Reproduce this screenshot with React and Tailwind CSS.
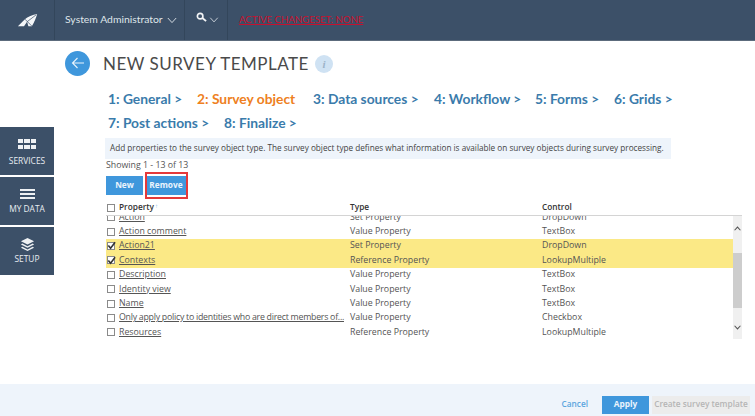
import React from "react";

const steps1 = [
  ["1: General >", false, "w-[89px]"],
  ["2: Survey object", true, "w-[116px]"],
  ["3: Data sources >", false, "w-[121px]"],
  ["4: Workflow >", false, "w-[101px]"],
  ["5: Forms >", false, "w-[79px]"],
  ["6: Grids >", false, ""],
];

const rows = [
  ["Action", "Set Property", "DropDown", false],
  ["Action comment", "Value Property", "TextBox", false],
  ["Action21", "Set Property", "DropDown", true],
  ["Contexts", "Reference Property", "LookupMultiple", true],
  ["Description", "Value Property", "TextBox", false],
  ["Identity view", "Value Property", "TextBox", false],
  ["Name", "Value Property", "TextBox", false],
  ["Only apply policy to identities who are direct members of...", "Value Property", "Checkbox", false],
  ["Resources", "Reference Property", "LookupMultiple", false],
];

function Box({ checked }) {
  return (
    <span className="flex h-[8px] w-[8px] shrink-0 items-center justify-center border border-[#8a8a8a] bg-white">
      {checked && (
        <svg viewBox="0 0 10 10" className="h-[9px] w-[9px] overflow-visible">
          <path d="M1.5 5 L4 8 L9 1.5" fill="none" stroke="#333" strokeWidth="1.8" />
        </svg>
      )}
    </span>
  );
}

function Chevron({ className, width = 1.1 }) {
  return (
    <svg viewBox="0 0 12 8" className={className}>
      <path d="M1 1 L6 6.5 L11 1" fill="none" stroke="currentColor" strokeWidth={width} />
    </svg>
  );
}

function Logo() {
  return (
    <svg viewBox="0 0 24 16" className="h-[14px] w-[23px]">
      <path d="M1 15 L9 7 C12 4 18 2 23 1 C22 5 20 10 17 15 L13 15 L11.5 10 L8 15 Z" fill="#f4f6f8" />
      <path d="M9 7 L17 15 M22 2 L11.5 10" stroke="#3c5068" strokeWidth="0.8" fill="none" />
    </svg>
  );
}

function SideItem({ icon, label, tight }) {
  return (
    <div className={`flex h-[48px] flex-col items-center justify-center bg-[#3c5068] text-[#e8edf2] ${tight ? "gap-[1px] pb-[2px]" : "gap-[3px]"}`}>
      <div className="flex h-[16px] items-center">{icon}</div>
      <div className="text-[8.4px] leading-[11px]">{label}</div>
    </div>
  );
}

export default function App() {
  return (
    <div className="flex h-[416px] w-[755px] flex-col overflow-hidden bg-white font-['Open_Sans',sans-serif] text-[#444]">
      <header className="flex h-[41px] shrink-0 items-stretch border-b border-[#5c6b7c] bg-[#3c5068] text-[#dfe5ea]">
        <div className="flex w-[55px] items-center justify-center border-r border-[#33465b]">
          <Logo />
        </div>
        <div className="flex w-[130px] items-center gap-[4px] border-r border-[#33465b] pl-[10px] font-['Lato',sans-serif] text-[10.4px]">
          System Administrator
          <Chevron className="mt-[1px] h-[7px] w-[10px]" />
        </div>
        <div className="flex w-[43px] items-center gap-[2px] border-r border-[#33465b] pb-[5px] pl-[11px]">
          <svg viewBox="0 0 12 12" className="h-[11px] w-[11px]">
            <circle cx="4.5" cy="4.5" r="3" fill="none" stroke="#f2f4f6" strokeWidth="1.8" />
            <path d="M7 6.5 L11 10" stroke="#f2f4f6" strokeWidth="2" />
          </svg>
          <Chevron className="mt-[5px] h-[6px] w-[10px]" />
        </div>
        <div className="flex items-center pl-[11px] font-['Lato',sans-serif] text-[9.6px] text-[#c8102e] underline">
          ACTIVE CHANGESET: NONE
        </div>
      </header>

      <div className="flex min-h-0 flex-1">
        <aside className="mt-[86px] flex w-[54px] shrink-0 flex-col gap-[2px] self-start">
          <SideItem
            label="SERVICES"
            icon={
              <div className="grid grid-cols-3 gap-[1.5px]">
                {[0, 1, 2, 3, 4, 5].map((i) => (
                  <span key={i} className="h-[4px] w-[5.3px] bg-[#eef1f4]" />
                ))}
              </div>
            }
          />
          <SideItem
            tight
            label="MY DATA"
            icon={
              <div className="flex flex-col gap-[2.5px]">
                {[0, 1, 2].map((i) => (
                  <span key={i} className="h-[1.5px] w-[15px] bg-[#eef1f4]" />
                ))}
              </div>
            }
          />
          <SideItem
            tight
            label="SETUP"
            icon={
              <svg viewBox="0 0 16 16" className="h-[15px] w-[15px]" fill="#eef1f4">
                <path d="M8 1 L15 4.5 L8 8 L1 4.5 Z" />
                <path d="M2.5 7 L8 9.8 L13.5 7 L15 8 L8 11.5 L1 8 Z" />
                <path d="M2.5 10.5 L8 13.3 L13.5 10.5 L15 11.5 L8 15 L1 11.5 Z" />
              </svg>
            }
          />
        </aside>

        <main className="min-w-0 flex-1 pr-[13px]">
          <div className="mt-[9px] flex h-[26px] items-center">
            <div className="ml-[11px] flex h-[25px] w-[25px] items-center justify-center rounded-full bg-[#3f97dc]">
              <svg viewBox="0 0 14 14" className="h-[14px] w-[14px]">
                <path d="M13 7 H1.5 M6.5 2 L1.5 7 L6.5 12" fill="none" stroke="#e9f3fb" strokeWidth="1.1" />
              </svg>
            </div>
            <h1 className="ml-[13px] mt-[2px] font-['Lato',sans-serif] text-[17px] tracking-[0.5px] text-[#4a4a4a]">
              NEW SURVEY TEMPLATE
            </h1>
            <div className="ml-[6px] mt-[2px] flex h-[18px] w-[18px] items-center justify-center rounded-full bg-[#cfe2f3] font-['Liberation_Serif',serif] text-[11px] font-bold italic text-[#9cb3c8]">
              i
            </div>
          </div>

          <div className="ml-[54px] mt-[11px] flex h-[24px] items-center font-['Lato',sans-serif] text-[13.8px] font-bold text-[#3a7bab]">
            {steps1.map(([t, active, w]) => (
              <div key={t} className={`${w} whitespace-nowrap ${active ? "text-[#ee7f22]" : ""}`}>
                {t}
              </div>
            ))}
          </div>
          <div className="ml-[54px] flex h-[24px] items-center font-['Lato',sans-serif] text-[13.8px] font-bold text-[#3a7bab]">
            <div className="w-[116px] whitespace-nowrap">7: Post actions &gt;</div>
            <div className="whitespace-nowrap">8: Finalize &gt;</div>
          </div>

          <div className="ml-[51px] mt-[3px] flex h-[21px] w-[566px] items-center bg-[#eef4fb] pl-[5px] text-[8.2px] whitespace-nowrap text-[#444]">
            Add properties to the survey object type. The survey object type defines what information is available on survey objects during survey processing.
          </div>
          <div className="ml-[52px] h-[12px] text-[8.8px] leading-[12px] text-[#555]">Showing 1 - 13 of 13</div>

          <div className="ml-[52px] mt-[5px] flex h-[19px] items-center">
            <div className="flex h-[19px] w-[37px] items-center justify-center bg-[#3f97dc] text-[8.3px] font-bold text-[#eaf4fc]">
              New
            </div>
            <div className="relative ml-[3px] flex h-[19px] w-[40px] items-center justify-center bg-[#3f97dc] text-[8.3px] font-bold text-[#eaf4fc]">
              Remove
              <span className="absolute -bottom-[4px] -left-[1px] -right-[2px] -top-[4px] border-2 border-[#e5393a]" />
            </div>
          </div>

          <div className="ml-[52px] mt-[6px] flex h-[15px] w-[636px] items-center border-b border-[#d4d4d4] pb-[1px] text-[8.3px] font-semibold text-[#333]">
            <div className="flex w-[244px] items-center gap-[4px] pl-[1px]">
              <Box />
              <span>Property</span>
              <span className="-mt-[4px] -ml-[3px] text-[6px] leading-none text-[#7db8e8]">↑</span>
            </div>
            <div className="w-[192px]">Type</div>
            <div>Control</div>
          </div>

          <div className="ml-[52px] flex h-[123px] w-[636px] overflow-hidden">
            <div className="w-[627px]">
              <div className="-mt-[6px] text-[8.8px] text-[#555]">
                {rows.map(([name, type, control, selected]) => (
                  <div
                    key={name}
                    className={`flex h-[14.4px] items-center ${selected ? "bg-[#fbe986]" : ""}`}
                  >
                    <div className="flex w-[244px] items-center gap-[4px] pl-[1px]">
                      <Box checked={selected} />
                      <span className={`underline whitespace-nowrap ${name.length > 40 ? "tracking-[-0.26px]" : ""}`}>{name}</span>
                    </div>
                    <div className="w-[192px] whitespace-nowrap">{type}</div>
                    <div>{control}</div>
                  </div>
                ))}
              </div>
            </div>
            <div className="flex w-[9px] flex-col items-center bg-[#f0f0f0] text-[#555]">
              <Chevron width={1.8} className="mt-[10px] h-[5px] w-[7px] rotate-180" />
              <div className="mt-[22px] h-[55px] w-full bg-[#cdcdcd]" />
              <Chevron width={1.8} className="mt-[17px] h-[5px] w-[7px]" />
            </div>
          </div>
        </main>
      </div>

      <footer className="flex h-[32px] shrink-0 items-center justify-end gap-[3px] bg-[#eef4fb] pr-[5px] pt-[9px] text-[8.3px] font-semibold">
        <span className="mr-[11px] text-[#5ba5de]">Cancel</span>
        <span className="flex h-[18px] w-[47px] items-center justify-center bg-[#3f97dc] font-bold text-[#eaf4fc]">Apply</span>
        <span className="flex h-[18px] w-[98px] items-center justify-center whitespace-nowrap bg-[#ececec] text-[#b5b5b5]">Create survey template</span>
      </footer>
    </div>
  );
}
